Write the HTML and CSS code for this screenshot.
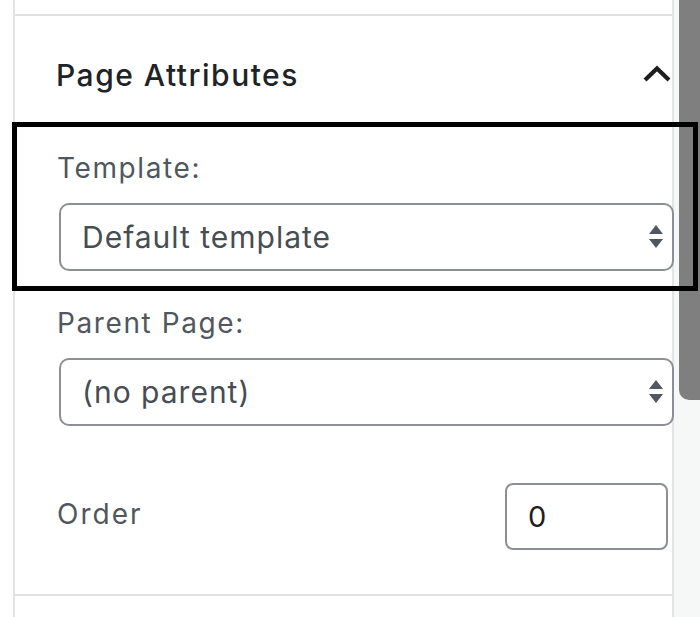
FILE: index.html
```html
<!DOCTYPE html>
<html lang="en">
<head>
<meta charset="utf-8">
<title>Page Attributes</title>
<link rel="stylesheet" href="styles.css">
</head>
<body>
<div class="screen">
  <div class="panel">
    <div class="top-strip"></div>
    <section class="attrs">
      <div class="attrs-head">
        <h2 class="attrs-title">Page Attributes</h2>
        <svg class="chevron" width="30" height="20" viewBox="0 0 30 20" aria-hidden="true">
          <path d="M3 17 L15 5.5 L27 17" fill="none" stroke="#1e1e1e" stroke-width="4.2" stroke-linejoin="miter"/>
        </svg>
      </div>
      <div class="field">
        <div class="field-label">Template:</div>
        <div class="select">
          <span class="select-value">Default template</span>
          <svg class="updown" width="16" height="26" viewBox="0 0 16 26" aria-hidden="true">
            <path d="M8 1 L15 10 L1 10 Z" fill="#50575e"/>
            <path d="M1 15 L15 15 L8 24 Z" fill="#50575e"/>
          </svg>
        </div>
      </div>
      <div class="field field-second">
        <div class="field-label">Parent Page:</div>
        <div class="select">
          <span class="select-value">(no parent)</span>
          <svg class="updown" width="16" height="26" viewBox="0 0 16 26" aria-hidden="true">
            <path d="M8 1 L15 10 L1 10 Z" fill="#50575e"/>
            <path d="M1 15 L15 15 L8 24 Z" fill="#50575e"/>
          </svg>
        </div>
      </div>
      <div class="order-row">
        <span class="order-label">Order</span>
        <div class="num-input">0</div>
      </div>
    </section>
    <div class="bottom-strip"></div>
  </div>
  <div class="gutter">
    <div class="thumb"></div>
    <div class="gutter-rest"></div>
  </div>
  <div class="highlight"></div>
</div>
</body>
</html>
```
FILE: styles.css
```css
html, body {
  margin: 0;
  padding: 0;
  background: #ffffff;
}

.screen {
  position: relative;
  display: flex;
  width: 700px;
  height: 617px;
  overflow: hidden;
  padding-left: 13px;
  box-sizing: border-box;
  font-family: Inter, "Noto Sans", sans-serif;
}

.panel {
  width: 661px;
  flex: none;
  border-left: 2px solid #e2e4e7;
  border-right: 2px solid #e2e4e7;
  box-sizing: border-box;
  display: flex;
  flex-direction: column;
  background: #ffffff;
}

.top-strip {
  height: 14px;
  border-bottom: 2px solid #e0e0e0;
  flex: none;
}

.attrs {
  padding: 43px 0 44px 44px;
  border-bottom: 2px solid #e0e0e0;
  flex: none;
}

.attrs-head {
  display: flex;
  align-items: center;
  justify-content: space-between;
  height: 32px;
  margin-left: -3px;
  padding-right: 0;
}

.attrs-title {
  margin: 0;
  font-size: 30px;
  line-height: 32px;
  font-weight: 500;
  color: #1d2327;
  letter-spacing: 1.5px;
}

.chevron {
  display: block;
  margin-top: -4px;
}

.field {
  margin-top: 62px;
}

.field-second {
  margin-top: 37px;
}

.field-label {
  font-size: 28px;
  line-height: 30px;
  color: #50575e;
  margin-left: -2px;
  letter-spacing: 1.6px;
}

.select {
  margin-top: 20px;
  height: 68px;
  border: 2px solid #8c8f94;
  border-radius: 10px;
  box-sizing: border-box;
  display: flex;
  align-items: center;
  justify-content: space-between;
  padding: 0 8px 0 21px;
  margin-right: -2px;
}

.select-value {
  font-size: 30px;
  color: #464d54;
  letter-spacing: 1px;
}

.updown {
  display: block;
}

.order-row {
  margin-top: 57px;
  display: flex;
  align-items: center;
  justify-content: space-between;
  padding-right: 4px;
}

.order-label {
  font-size: 28px;
  color: #50575e;
  margin-left: -2px;
  margin-top: -6px;
  letter-spacing: 2px;
}

.num-input {
  width: 163px;
  height: 67px;
  border: 2px solid #8c8f94;
  border-radius: 8px;
  box-sizing: border-box;
  font-size: 29px;
  color: #1e1e1e;
  display: flex;
  align-items: center;
  padding-left: 21px;
}

.bottom-strip {
  flex: 1;
}

.gutter {
  flex: 1;
  display: flex;
  flex-direction: column;
  background: #f6f7f7;
}

.thumb {
  margin-left: 5px;
  width: 21px;
  height: 400px;
  background: #7f7f7f;
  border-radius: 0 0 0 10px;
  flex: none;
}

.gutter-rest {
  flex: 1;
  position: relative;
}

.highlight {
  position: absolute;
  left: 12px;
  top: 122px;
  width: 686px;
  height: 169px;
  border: 5px solid #000000;
  box-sizing: border-box;
  pointer-events: none;
}
```
